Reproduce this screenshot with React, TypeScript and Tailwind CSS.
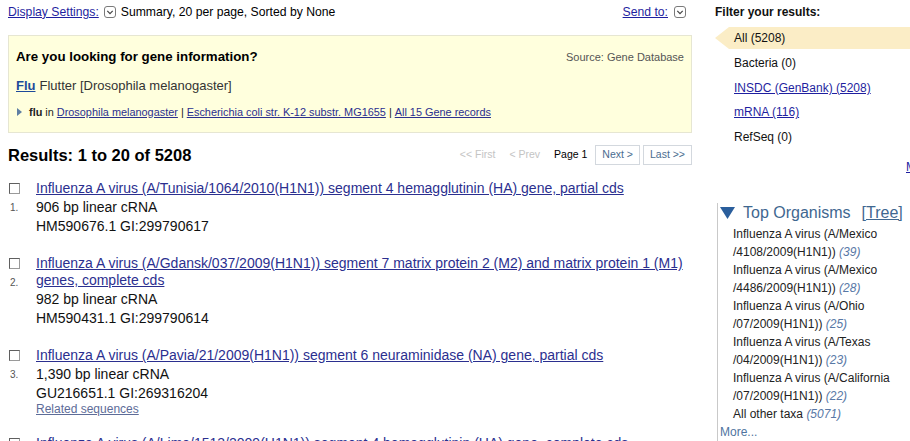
import React from "react";

type Result = {
  n: number;
  title: string;
  desc: string;
  acc: string;
  related?: boolean;
};

const results: Result[] = [
  {
    n: 1,
    title: "Influenza A virus (A/Tunisia/1064/2010(H1N1)) segment 4 hemagglutinin (HA) gene, partial cds",
    desc: "906 bp linear cRNA",
    acc: "HM590676.1 GI:299790617",
  },
  {
    n: 2,
    title:
      "Influenza A virus (A/Gdansk/037/2009(H1N1)) segment 7 matrix protein 2 (M2) and matrix protein 1 (M1) genes, complete cds",
    desc: "982 bp linear cRNA",
    acc: "HM590431.1 GI:299790614",
  },
  {
    n: 3,
    title: "Influenza A virus (A/Pavia/21/2009(H1N1)) segment 6 neuraminidase (NA) gene, partial cds",
    desc: "1,390 bp linear cRNA",
    acc: "GU216651.1 GI:269316204",
    related: true,
  },
  {
    n: 4,
    title: "Influenza A virus (A/Lima/1513/2009(H1N1)) segment 4 hemagglutinin (HA) gene, complete cds",
    desc: "1,701 bp linear cRNA",
    acc: "HM590420.1 GI:299790592",
  },
];

const organisms = [
  { a: "Influenza A virus (A/Mexico", b: "/4108/2009(H1N1))", count: 39 },
  { a: "Influenza A virus (A/Mexico", b: "/4486/2009(H1N1))", count: 28 },
  { a: "Influenza A virus (A/Ohio", b: "/07/2009(H1N1))", count: 25 },
  { a: "Influenza A virus (A/Texas", b: "/04/2009(H1N1))", count: 23 },
  { a: "Influenza A virus (A/California", b: "/07/2009(H1N1))", count: 22 },
];

function DropIcon() {
  return (
    <svg width="12" height="12" viewBox="0 0 12 12" className="shrink-0">
      <rect x="0.5" y="0.5" width="11" height="11" rx="2.5" fill="#fff" stroke="#7a7a7a" />
      <path d="M3.3 4.8 L6 7.6 L8.7 4.8" fill="none" stroke="#444" strokeWidth="1.2" />
    </svg>
  );
}

function Checkbox() {
  return (
    <span className="block h-[11px] w-[11px] border border-[#9a9a9a] border-l-[#5f5f5f] border-t-[#5f5f5f] bg-white" />
  );
}

function ResultRow({ r }: { r: Result }) {
  return (
    <div className="flex">
      <div className="flex w-[28px] shrink-0 flex-col">
        <div className="flex h-[19px] items-center pl-[1px]">
          <Checkbox />
        </div>
        <div className="flex h-[19px] items-center pl-[2px] text-[10px] text-[#555]">{r.n}.</div>
      </div>
      <div className="w-[658px] text-[14px] leading-[19px] text-[#111]">
        <div className="pb-[1px] pt-[1px] leading-[17px]">
          <a className="text-[#2b2f8f] underline">{r.title}</a>
        </div>
        <div>{r.desc}</div>
        <div>{r.acc}</div>
        {r.related && (
          <div className="text-[12px] leading-[13px]">
            <a className="text-[#5d6c98] underline">Related sequences</a>
          </div>
        )}
      </div>
    </div>
  );
}

export default function App() {
  return (
    <div className="flex h-[441px] w-[910px] overflow-hidden bg-white font-['Liberation_Sans',Arial,sans-serif] text-black">
      {/* main results column */}
      <main className="w-[700px] shrink-0 px-2">
        <div className="flex h-[24px] items-center justify-between text-[12.2px]">
          <div className="flex items-center">
            <a className="text-[#1f1fa0] underline">Display Settings:</a>
            <span className="ml-[5px]">
              <DropIcon />
            </span>
            <span className="ml-[5px]">Summary, 20 per page, Sorted by None</span>
          </div>
          <div className="flex items-center pr-[6px]">
            <a className="text-[#1f1fa0] underline">Send to:</a>
            <span className="ml-[6px]">
              <DropIcon />
            </span>
          </div>
        </div>

        {/* gene suggestion box */}
        <div className="mt-[11px] h-[98px] border border-[#e6e6d2] bg-[#ffffdd] px-[7px] pt-[13px]">
          <div className="flex h-[16px] items-center justify-between">
            <span className="text-[13.3px] font-bold">Are you looking for gene information?</span>
            <span className="text-[11px] text-[#555]">Source: Gene Database</span>
          </div>
          <div className="mt-[12px] flex h-[18px] items-center text-[13px] text-[#333]">
            <a className="font-bold text-[#1d4a9a] underline">Flu</a>
            <span className="ml-[4px]">Flutter [Drosophila melanogaster]</span>
          </div>
          <div className="mt-[10px] flex h-[14px] items-center text-[10.9px] text-[#222]">
            <svg width="6" height="8" viewBox="0 0 6 8" className="ml-[1px] mr-[6px]">
              <path d="M0 0 L5 4 L0 8 Z" fill="#5f7fa3" />
            </svg>
            <b>flu</b>
            <span className="ml-[3px]">in</span>
            <a className="ml-[3px] text-[#2b2f8f] underline">Drosophila melanogaster</a>
            <span className="mx-[3px]">|</span>
            <a className="text-[#2b2f8f] underline">Escherichia coli str. K-12 substr. MG1655</a>
            <span className="mx-[3px]">|</span>
            <a className="text-[#2b2f8f] underline">All 15 Gene records</a>
          </div>
        </div>

        {/* results heading + pager */}
        <div className="mt-[12px] flex h-[20px] items-center justify-between">
          <h2 className="text-[16.5px] font-bold">Results: 1 to 20 of 5208</h2>
          <div className="flex h-[20px] items-stretch gap-[2px] text-[10.5px]">
            <span className="flex items-center px-[6px] text-[#c4c4c4]">&lt;&lt; First</span>
            <span className="flex items-center px-[6px] text-[#c4c4c4]">&lt; Prev</span>
            <span className="flex items-center px-[6px] text-black">Page 1</span>
            <span className="flex items-center border border-[#d3d8de] px-[6px] text-[#4b6d8f]">Next &gt;</span>
            <span className="ml-[1px] flex items-center border border-[#d3d8de] px-[6px] text-[#4b6d8f]">
              Last &gt;&gt;
            </span>
          </div>
        </div>

        <div className="mt-[14px] flex flex-col gap-[18px]">
          {results.map((r) => (
            <ResultRow key={r.n} r={r} />
          ))}
        </div>
      </main>

      {/* filter sidebar */}
      <aside className="w-[210px] shrink-0 pl-[15px] text-[12px] text-[#111]">
        <div className="flex h-[24px] items-center font-bold">Filter your results:</div>
        <div className="mt-[3px] flex h-[22px] items-center bg-[#fbedc6] pl-[19px] [clip-path:polygon(0_50%,14px_0,100%_0,100%_100%,14px_100%)]">
          All (5208)
        </div>
        <div className="mt-[2px] pl-[19px]">
          <div className="flex h-[24.5px] items-center">Bacteria (0)</div>
          <div className="flex h-[24.5px] items-center">
            <a className="text-[#1f1fa0] underline">INSDC (GenBank) (5208)</a>
          </div>
          <div className="flex h-[24.5px] items-center">
            <a className="text-[#1f1fa0] underline">mRNA (116)</a>
          </div>
          <div className="flex h-[24.5px] items-center">RefSeq (0)</div>
        </div>
        <div className="mt-[10px] flex h-[16px] items-center whitespace-nowrap pl-[191px]">
          <a className="text-[#1f1fa0] underline">Manage Filters</a>
        </div>

        {/* top organisms */}
        <div className="ml-[2px] mt-[28px] border-l border-[#c9c9c9]">
          <div className="flex h-[19px] items-center whitespace-nowrap pl-[2px] text-[16px] text-[#3f6790]">
            <svg width="15" height="12" viewBox="0 0 15 12" className="mr-[8px]">
              <path d="M0 0 L15 0 L7.5 12 Z" fill="#2a5e9c" />
            </svg>
            <span>Top Organisms</span>
            <a className="ml-[11px] underline">[Tree]</a>
          </div>
          <div className="mt-[3px] pl-[15px] leading-[18px] text-[#222]">
            {organisms.map((o, i) => (
              <div key={i}>
                <div>{o.a}</div>
                <div>
                  {o.b} <i className="text-[#5878a6]">({o.count})</i>
                </div>
              </div>
            ))}
            <div>
              All other taxa <i className="text-[#5878a6]">(5071)</i>
            </div>
          </div>
          <div className="pl-[2px] leading-[18px] text-[#4f74a0]">More...</div>
        </div>
      </aside>
    </div>
  );
}
